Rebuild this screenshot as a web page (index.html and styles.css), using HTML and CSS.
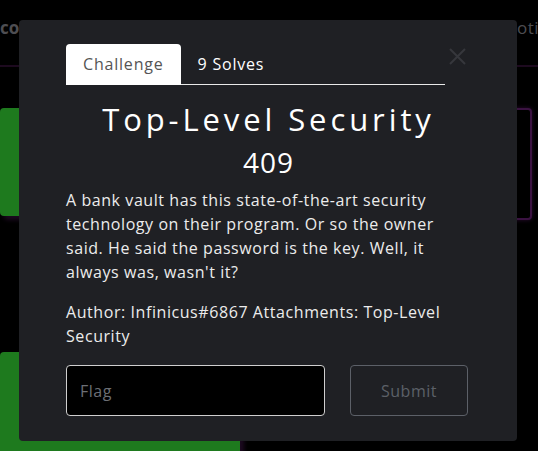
FILE: index.html
```html
<!DOCTYPE html>
<html>
<head>
<meta charset="utf-8">
<link rel="stylesheet" href="styles.css">
</head>
<body>
<div class="page">
  <header class="topbar">
    <span class="brand">cor</span>
    <span class="navlink">Noti</span>
  </header>
  <div class="board">
    <div class="card solved"></div>
    <div class="card open"></div>
    <div class="card solved tall"></div>
  </div>
</div>

<div class="modal">
  <button class="close" aria-label="Close">
    <svg width="17" height="17" viewBox="0 0 17 17"><path d="M1 1L16 16M16 1L1 16" stroke="#36373c" stroke-width="2" fill="none"/></svg>
  </button>
  <div class="tabs">
    <div class="tab active">Challenge</div>
    <div class="tab">9 Solves</div>
  </div>
  <h2 class="title">Top-Level Security</h2>
  <div class="points">409</div>
  <p class="desc">A bank vault has this state-of-the-art security technology on their program. Or so the owner said. He said the password is the key. Well, it always was, wasn't it?</p>
  <p class="meta">Author: Infinicus#6867 Attachments: Top-Level Security</p>
  <div class="submit-row">
    <input class="flag" type="text" placeholder="Flag">
    <button class="submit">Submit</button>
  </div>
</div>
</body>
</html>
```
FILE: styles.css
```css
html, body {
  margin: 0;
  padding: 0;
  background: #000;
  font-family: "Open Sans", "DejaVu Sans", sans-serif;
  overflow: hidden;
}
.page {
  width: 538px;
  height: 451px;
  overflow: hidden;
}
.topbar {
  height: 67px;
  border-bottom: 2px solid #1d0a1f;
  display: flex;
  justify-content: space-between;
  align-items: center;
  color: #4e4e52;
  font-size: 17px;
  padding-bottom: 10px;
  box-sizing: border-box;
}
.brand {
  font-weight: bold;
}
.navlink {
  margin-right: -1px;
  letter-spacing: 0.5px;
}
.board {
  display: grid;
  grid-template-columns: 240px 248px;
  column-gap: 44px;
  row-gap: 132px;
  padding-top: 41px;
}
.card {
  height: 108px;
  border-radius: 4px;
}
.card.solved {
  background: #1e7a1e;
  box-shadow: 4px 4px 4px #1c0a20;
}
.card.open {
  background: #000;
  border: 2px solid #3a1241;
  box-shadow: 0 0 4px #2a0c30;
}
.card.tall {
  height: 140px;
}
.modal {
  position: fixed;
  left: 19px;
  top: 20px;
  width: 498px;
  height: 421px;
  box-sizing: border-box;
  background: #1f2024;
  border-radius: 4px;
  padding: 24px 46px 0 47px;
  color: #fff;
}
.close {
  position: absolute;
  top: 28px;
  left: 430px;
  background: none;
  border: 0;
  padding: 0;
  width: 17px;
  height: 17px;
}
.close svg { display: block; }
.tabs {
  display: flex;
  width: 379px;
  border-bottom: 1px solid #e9e9e9;
  height: 40px;
}
.tab {
  font-size: 16px;
  padding: 0 17px;
  line-height: 40px;
  color: #fff;
  letter-spacing: 0.8px;
}
.tab.active {
  background: #fff;
  color: #555;
  border-radius: 4px 4px 0 0;
  height: 41px;
}
.title {
  margin: 14px 0 0 0;
  text-align: center;
  font-weight: 400;
  font-size: 31px;
  line-height: 40px;
  letter-spacing: 3.9px;
}
.points {
  margin-top: 3px;
  text-align: center;
  font-size: 28px;
  line-height: 40px;
  font-weight: 500;
  letter-spacing: 1px;
}
.desc {
  margin: 6px 0 0 0;
  font-size: 16px;
  line-height: 24px;
  color: #ececec;
  letter-spacing: 0.57px;
}
.meta {
  margin: 16px 0 0 0;
  font-size: 16px;
  line-height: 24px;
  color: #ececec;
  letter-spacing: 0.57px;
}
.submit-row {
  display: flex;
  gap: 25px;
  margin-top: 17px;
}
.flag {
  width: 259px;
  height: 51px;
  box-sizing: border-box;
  background: #000;
  border: 1px solid #cfcfcf;
  border-radius: 4px;
  padding: 0 13px;
  font-family: inherit;
  font-size: 16px;
  letter-spacing: 0.5px;
  color: #fff;
}
.flag::placeholder {
  color: #6c6f75;
}
.submit {
  width: 118px;
  height: 51px;
  background: transparent;
  border: 1px solid #5c6068;
  border-radius: 4px;
  color: #5c6068;
  font-family: inherit;
  font-size: 16px;
  letter-spacing: 0.5px;
}
```
